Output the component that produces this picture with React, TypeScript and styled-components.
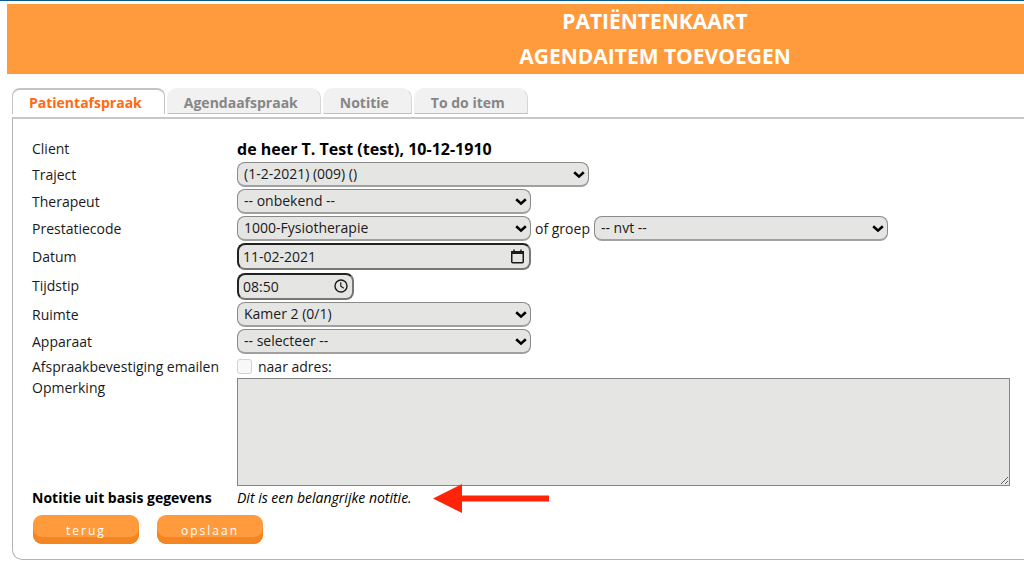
import React from "react";
import styled, { createGlobalStyle } from "styled-components";

const GlobalStyle = createGlobalStyle`
  * { box-sizing: border-box; }
  body {
    margin: 0;
    background: #fff;
    color: #1a1a1a;
    font-family: "Open Sans", "Noto Sans", sans-serif;
    font-size: 14px;
    line-height: 20px;
    overflow-x: hidden;
  }
  input, select, textarea, button { font: inherit; color: inherit; margin: 0; }
`;

const Page = styled.div`
  border-top: 1px solid #0b5c8c;
  padding-top: 3px;
`;

const Banner = styled.header`
  margin-left: 7px;
  padding-left: 279px;
  background: #ff9b3c;
  color: #fff;
  text-align: center;
`;

const BannerTitle = styled.h1`
  margin: 0;
  font-size: 21px;
  line-height: 35px;
  font-weight: 700;
  text-transform: uppercase;
`;

const Tabs = styled.div`
  display: flex;
  gap: 2px;
  margin: 14px 0 3px 12px;
`;

const Tab = styled.button<{ $active?: boolean }>`
  height: 26px;
  padding: ${(p) => (p.$active ? "1px" : "3px")} 22px 0 16px;
  border: 1px solid ${(p) => (p.$active ? "#c4c4c4" : "#f1f1f1")};
  border-right-color: ${(p) => (p.$active ? "#c4c4c4" : "#d6d6d6")};
  border-bottom: ${(p) => (p.$active ? "0" : "1px solid #c0c0c0")};
  border-top-width: ${(p) => (p.$active ? "2px" : "1px")};
  border-radius: ${(p) => (p.$active ? "8px 8px 0 0" : "10px 10px 0 0")};
  background: ${(p) => (p.$active ? "#fff" : "#f1f1f1")};
  color: ${(p) => (p.$active ? "#ff6a13" : "#868686")};
  font-weight: 700;
  cursor: pointer;
`;

const Panel = styled.form`
  margin-left: 12px;
  padding: 18px 14px 15px 19px;
  border: 1px solid #b4b4b4;
  border-top: 2px solid #c8c8c8;
  border-right: 0;
  border-radius: 0 0 0 10px;
`;

const Row = styled.div<{ $height?: number }>`
  display: grid;
  grid-template-columns: 205px minmax(0, 1fr);
  align-items: center;
  min-height: ${(p) => p.$height ?? 27}px;
`;

const TopRow = styled(Row)`
  align-items: start;
`;

const Label = styled.label`
  white-space: nowrap;
`;

const StrongLabel = styled.span`
  color: #000;
  font-weight: 700;
`;

const Client = styled.strong`
  color: #000;
  font-size: 16px;
`;

const Inline = styled.div`
  display: flex;
  align-items: center;
  gap: 4px;
`;

const Field = styled.div<{ $width: number }>`
  display: grid;
  width: ${(p) => p.$width}px;
  align-items: center;
  > * { grid-area: 1 / 1; }
  > svg {
    justify-self: end;
    pointer-events: none;
  }
`;

const SelectBox = styled.select`
  appearance: none;
  width: 100%;
  height: 25px;
  padding: 0 24px 0 6px;
  border: 1px solid #8a8a8a;
  border-bottom: 2px solid #a0a0a0;
  border-radius: 8px;
  background: #e5e5e3;
`;

const ChevronIcon = styled.svg`
  margin-right: 4px;
`;

const TextBox = styled.input`
  width: 100%;
  height: 27px;
  padding: 0 24px 0 4px;
  border: 2px solid;
  border-color: #222 #777 #777 #222;
  border-radius: 8px;
  background: #e5e5e3;
`;

const BoxIcon = styled.svg`
  margin-right: 6px;
`;

const CheckLabel = styled.label`
  display: flex;
  align-items: center;
  gap: 6px;
`;

const CheckBox = styled.input`
  appearance: none;
  width: 15px;
  height: 15px;
  border: 1px solid #d2d2d2;
  border-radius: 3px;
  background: #f8f8f8;
`;

const Remarks = styled.textarea`
  display: block;
  width: 100%;
  height: 108px;
  border: 1px solid #868686;
  background: #e5e5e3;
  resize: vertical;
`;

const Note = styled.em`
  color: #000;
`;

const ArrowMark = styled.svg`
  margin: -3px 0 -3px 17px;
`;

const Actions = styled.div`
  display: flex;
  gap: 18px;
  margin: 5px 0 0 1px;
`;

const ActionButton = styled.button`
  width: 106px;
  height: 29px;
  padding: 2px 0 0;
  border: 0;
  border-radius: 9px;
  background: #ff9b3c;
  box-shadow: inset 0 -7px 0 #f38522;
  color: #fff;
  font-size: 12px;
  letter-spacing: 2px;
  cursor: pointer;
`;

function Select({ id, width, value }: { id: string; width: number; value: string }) {
  return (
    <Field $width={width}>
      <SelectBox id={id}>
        <option>{value}</option>
      </SelectBox>
      <ChevronIcon width="12" height="8" viewBox="0 0 12 8" fill="none" stroke="#000" strokeWidth="2.6">
        <path d="M1.2 1.2 L6 5.6 L10.8 1.2" />
      </ChevronIcon>
    </Field>
  );
}

export default function App() {
  return (
    <>
      <GlobalStyle />
      <Page>
        <Banner>
          <BannerTitle>Patiëntenkaart<br />Agendaitem toevoegen</BannerTitle>
        </Banner>
        <Tabs role="tablist">
          <Tab role="tab" aria-selected $active>Patientafspraak</Tab>
          <Tab role="tab">Agendaafspraak</Tab>
          <Tab role="tab">Notitie</Tab>
          <Tab role="tab">To do item</Tab>
        </Tabs>
        <Panel onSubmit={(e) => e.preventDefault()}>
          <Row $height={24}>
            <span>Client</span>
            <Client>de heer T. Test (test), 10-12-1910</Client>
          </Row>
          <Row>
            <Label htmlFor="traject">Traject</Label>
            <Select id="traject" width={352} value="(1-2-2021) (009) ()" />
          </Row>
          <Row>
            <Label htmlFor="therapeut">Therapeut</Label>
            <Select id="therapeut" width={294} value="-- onbekend --" />
          </Row>
          <Row>
            <Label htmlFor="prestatie">Prestatiecode</Label>
            <Inline>
              <Select id="prestatie" width={294} value="1000-Fysiotherapie" />
              <Label htmlFor="groep">of groep</Label>
              <Select id="groep" width={294} value="-- nvt --" />
            </Inline>
          </Row>
          <Row $height={29}>
            <Label htmlFor="datum">Datum</Label>
            <Field $width={294}>
              <TextBox id="datum" defaultValue="11-02-2021" />
              <BoxIcon width="15" height="16" viewBox="0 0 15 16" fill="none" stroke="#1a1a1a">
                <rect x="1.75" y="2.75" width="11.5" height="11" rx="1" strokeWidth="1.5" />
                <path d="M1 3.5h13" strokeWidth="3" />
                <path d="M4 0.5v2M11 0.5v2" strokeWidth="1.5" />
              </BoxIcon>
            </Field>
          </Row>
          <Row $height={30}>
            <Label htmlFor="tijdstip">Tijdstip</Label>
            <Field $width={117}>
              <TextBox id="tijdstip" defaultValue="08:50" />
              <BoxIcon width="14" height="14" viewBox="0 0 14 14" fill="none" stroke="#1a1a1a">
                <circle cx="7" cy="7" r="6" strokeWidth="1.4" />
                <path d="M6.8 3.2v4l3 2" strokeWidth="1.2" />
              </BoxIcon>
            </Field>
          </Row>
          <Row>
            <Label htmlFor="ruimte">Ruimte</Label>
            <Select id="ruimte" width={294} value="Kamer 2 (0/1)" />
          </Row>
          <Row>
            <Label htmlFor="apparaat">Apparaat</Label>
            <Select id="apparaat" width={294} value="-- selecteer --" />
          </Row>
          <Row $height={23}>
            <Label htmlFor="emailen">Afspraakbevestiging emailen</Label>
            <CheckLabel>
              <CheckBox id="emailen" type="checkbox" />
              naar adres:
            </CheckLabel>
          </Row>
          <TopRow>
            <Label htmlFor="opmerking">Opmerking</Label>
            <Remarks id="opmerking" />
          </TopRow>
          <Row $height={24}>
            <StrongLabel>Notitie uit basis gegevens</StrongLabel>
            <Inline>
              <Note>Dit is een belangrijke notitie.</Note>
              <ArrowMark width="116" height="29" viewBox="0 0 116 29" fill="#ff2408">
                <path d="M0 14.5 L29 0 V11.5 H116 V17.5 H29 V29 Z" />
              </ArrowMark>
            </Inline>
          </Row>
          <Actions>
            <ActionButton type="button">terug</ActionButton>
            <ActionButton type="submit">opslaan</ActionButton>
          </Actions>
        </Panel>
      </Page>
    </>
  );
}
